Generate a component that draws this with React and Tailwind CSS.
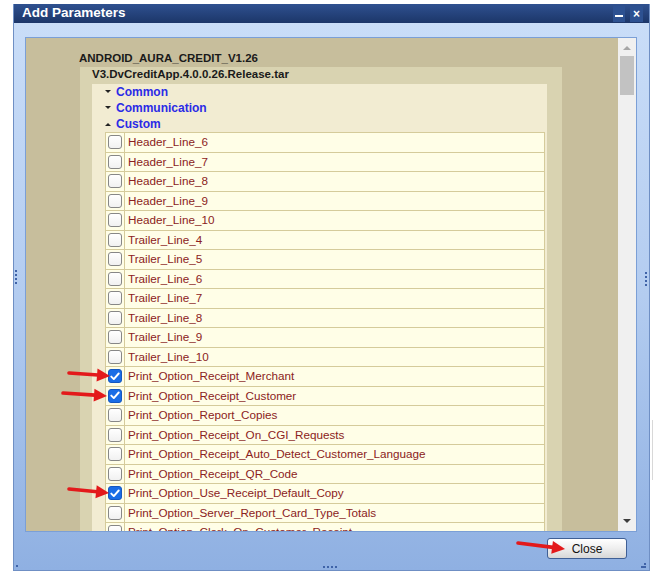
const rows = [
  { label: 'Header_Line_6' },
  { label: 'Header_Line_7' },
  { label: 'Header_Line_8' },
  { label: 'Header_Line_9' },
  { label: 'Header_Line_10' },
  { label: 'Trailer_Line_4' },
  { label: 'Trailer_Line_5' },
  { label: 'Trailer_Line_6' },
  { label: 'Trailer_Line_7' },
  { label: 'Trailer_Line_8' },
  { label: 'Trailer_Line_9' },
  { label: 'Trailer_Line_10' },
  { label: 'Print_Option_Receipt_Merchant', checked: true },
  { label: 'Print_Option_Receipt_Customer', checked: true },
  { label: 'Print_Option_Report_Copies' },
  { label: 'Print_Option_Receipt_On_CGI_Requests' },
  { label: 'Print_Option_Receipt_Auto_Detect_Customer_Language' },
  { label: 'Print_Option_Receipt_QR_Code' },
  { label: 'Print_Option_Use_Receipt_Default_Copy', checked: true },
  { label: 'Print_Option_Server_Report_Card_Type_Totals' },
  { label: 'Print_Option_Clerk_On_Customer_Receipt' },
]

function Checkbox({ checked }) {
  if (checked) {
    return (
      <span className="w-[14px] h-[14px] rounded-[3px] bg-[#1a6de6] border border-[#1457c0] flex items-center justify-center">
        <svg width="10" height="9" viewBox="0 0 10 9">
          <path d="M1.3 4.6 L3.8 7.1 L8.7 1.5" fill="none" stroke="white" strokeWidth="1.9" strokeLinecap="round" strokeLinejoin="round" />
        </svg>
      </span>
    )
  }
  return <span className="w-[14px] h-[14px] rounded-[3px] bg-gradient-to-b from-white to-[#f1f1f1] border border-[#878787]" />
}

function Group({ label, open }) {
  return (
    <div className="h-[16px] flex items-center text-[12px] font-bold text-[#2b2be6]">
      <svg width="6" height="4" viewBox="0 0 6 4" className="mr-[5px]">
        {open ? <path d="M0 4 L3 1 L6 4 Z" fill="#222" /> : <path d="M0 0 L6 0 L3 3 Z" fill="#222" />}
      </svg>
      {label}
    </div>
  )
}

function Dots({ vertical }) {
  return (
    <span className={vertical ? 'flex flex-col gap-[2px]' : 'flex gap-[2px]'}>
      {[0, 1, 2, 3].map(i => (
        <span key={i} className="w-[2px] h-[2px] bg-[#3f63a8]" />
      ))}
    </span>
  )
}

function Arrow({ x1, y1, x2, y2 }) {
  const a = Math.atan2(y2 - y1, x2 - x1)
  const len = 13
  const w = 6.5
  const bx = x2 - len * Math.cos(a)
  const by = y2 - len * Math.sin(a)
  const px = -Math.sin(a) * w
  const py = Math.cos(a) * w
  return (
    <g>
      <line x1={x1} y1={y1} x2={bx + 1} y2={by} stroke="#e3191b" strokeWidth="3.6" strokeLinecap="round" />
      <polygon points={`${x2},${y2} ${bx + px},${by + py} ${bx - px},${by - py}`} fill="#e3191b" />
    </g>
  )
}

export default function App() {
  return (
    <div className="relative w-[670px] h-[578px] bg-white overflow-hidden" style={{ fontFamily: '"Liberation Sans", Arial, sans-serif' }}>
      <div className="absolute left-[652px] top-[420px] w-px h-[60px] bg-[#d8d8d8]" />

      {/* Dialog */}
      <div className="relative ml-[13px] mt-[4px] w-[637px] h-[567px] flex flex-col border border-[#6f8fc4] border-t-0">
        {/* Title bar */}
        <div className="h-[19px] flex items-center justify-between pl-[8px] pr-[6px] bg-gradient-to-b from-[#2f5190] to-[#1c3669]">
          <span className="text-[13.5px] font-bold text-white leading-none -mt-[2px]">Add Parameters</span>
          <div className="flex items-center gap-[5px]">
            <span className="w-[12px] h-[16px] bg-[#2d5191] flex items-center justify-center">
              <span className="w-[8px] h-[2px] bg-white mt-[4px]" />
            </span>
            <span className="w-[13px] h-[16px] bg-[#2d5191] flex items-center justify-center text-white text-[12px] font-bold leading-none">×</span>
          </div>
        </div>

        {/* Body */}
        <div className="flex-1 flex flex-col pl-[11px] pr-[12px] pt-[14px] bg-gradient-to-b from-[#c9ddf8] via-[#b3ccf0] to-[#8fb0e2]">
          {/* Panel */}
          <div className="h-[495px] flex border border-[#7b9fd6]">
            <div className="flex-1 bg-[#c7be9c] overflow-hidden pl-[54px] pt-[13px] pr-[56px]">
              <div className="h-[16px] -ml-px flex items-center text-[11.5px] font-bold text-[#1a1a1a]">ANDROID_AURA_CREDIT_V1.26</div>
              <div className="bg-[#d9d3b1] pl-[12px] pr-[15px] h-[600px]">
                <div className="h-[16px] flex items-center text-[11.5px] font-bold text-[#1a1a1a]">V3.DvCreditApp.4.0.0.26.Release.tar</div>
                <div className="mt-px bg-[#f2ecd2] pl-[13px] pr-[2px] h-[600px]">
                  <Group label="Common" />
                  <Group label="Communication" />
                  <Group label="Custom" open />
                  <div className="border-t border-l border-r border-[#d5cb9b]">
                    {rows.map(r => (
                      <div key={r.label} className="h-[19.5px] flex bg-[#fffee7] border-b border-[#d5cb9b]">
                        <div className="w-[19px] border-r border-[#d5cb9b] flex items-center pl-[2px]">
                          <Checkbox checked={r.checked} />
                        </div>
                        <div className="pl-[3px] flex items-center text-[11.7px] text-[#8b2222] whitespace-nowrap">{r.label}</div>
                      </div>
                    ))}
                  </div>
                </div>
              </div>
            </div>

            {/* Scrollbar */}
            <div className="w-[18px] bg-[#f0f0f0] flex flex-col items-center">
              <svg width="8" height="5" viewBox="0 0 8 5" className="mt-[7px]">
                <path d="M0 5 L4 1 L8 5 Z" fill="#a6a6a6" />
              </svg>
              <div className="mt-[6px] w-[14px] h-[39px] bg-[#c2c2c2]" />
              <div className="flex-1" />
              <svg width="8" height="5" viewBox="0 0 8 5" className="mb-[7px]">
                <path d="M0 0 L8 0 L4 4 Z" fill="#3d3d3d" />
              </svg>
            </div>
          </div>

          {/* Footer */}
          <div className="flex-1 flex justify-end items-start pt-[6px] pr-[10px]">
            <button className="w-[80px] h-[21px] rounded-[3px] border border-[#3f5f95] bg-gradient-to-b from-white via-[#eeeeee] to-[#d7d7d7] text-[12px] text-[#111] leading-none">
              Close
            </button>
          </div>
        </div>

        {/* Resize handles */}
        <div className="absolute left-[1px] top-[266px]"><Dots vertical /></div>
        <div className="absolute right-[2px] top-[268px]"><Dots vertical /></div>
        <div className="absolute left-[309px] bottom-[2px]"><Dots /></div>
        <div className="absolute left-[2px] bottom-[3px] w-[2px] h-[2px] bg-[#3f63a8]" />
        <div className="absolute right-[3px] bottom-[2px] flex flex-col items-end gap-[1px]">
          <span className="w-[2px] h-[2px] bg-[#3f63a8]" />
          <span className="w-[5px] h-[2px] bg-[#3f63a8]" />
        </div>
      </div>

      {/* Annotation arrows */}
      <svg className="absolute inset-0 pointer-events-none" width="670" height="578">
        <Arrow x1={69} y1={373} x2={110} y2={376} />
        <Arrow x1={63} y1={393} x2={107} y2={396} />
        <Arrow x1={69} y1={489} x2={109} y2={493} />
        <Arrow x1={518} y1={543} x2={565} y2={549} />
      </svg>
    </div>
  )
}
